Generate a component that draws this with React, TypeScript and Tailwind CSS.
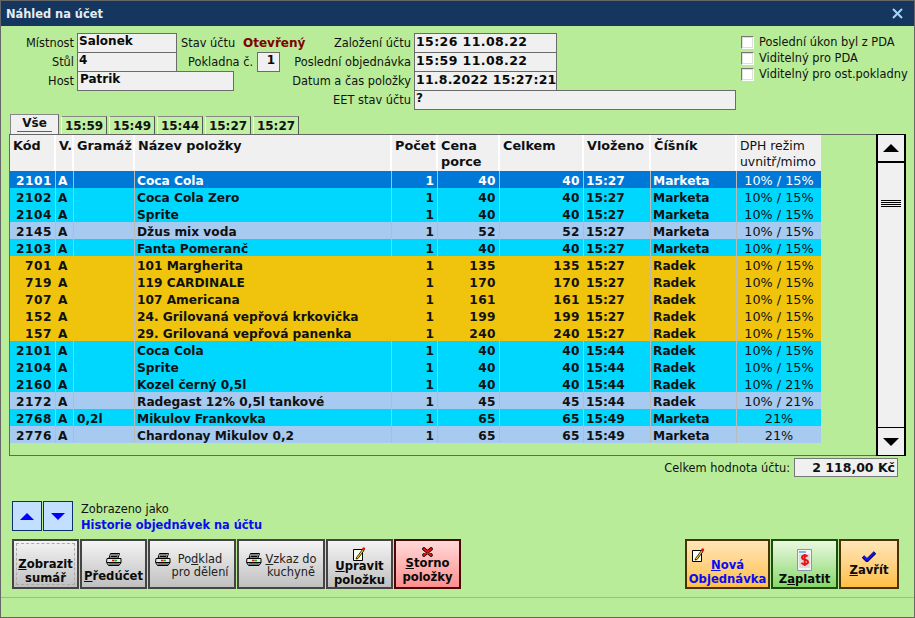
const cols = [
  "w-[46px]",
  "w-[18px]",
  "w-[61px]",
  "w-[257px]",
  "w-[46px]",
  "w-[62px]",
  "w-[84px]",
  "w-[67px]",
  "w-[86px]",
  "w-[84px]",
]

const CYAN = "bg-[#00d7ff]"
const BLUE = "bg-[#a6caf0]"
const GOLD = "bg-[#f0c40c]"
const SEL = "bg-[#0078d7] text-white"

const rows = [
  [SEL, "2101", "", "Coca Cola", "40", "15:27", "Marketa", "10% / 15%"],
  [CYAN, "2102", "", "Coca Cola Zero", "40", "15:27", "Marketa", "10% / 15%"],
  [CYAN, "2104", "", "Sprite", "40", "15:27", "Marketa", "10% / 15%"],
  [BLUE, "2145", "", "Džus mix voda", "52", "15:27", "Marketa", "10% / 15%"],
  [CYAN, "2103", "", "Fanta Pomeranč", "40", "15:27", "Marketa", "10% / 15%"],
  [GOLD, "701", "", "101 Margherita", "135", "15:27", "Radek", "10% / 15%"],
  [GOLD, "719", "", "119 CARDINALE", "170", "15:27", "Radek", "10% / 15%"],
  [GOLD, "707", "", "107 Americana", "161", "15:27", "Radek", "10% / 15%"],
  [GOLD, "152", "", "24. Grilovaná vepřová krkovička", "199", "15:27", "Radek", "10% / 15%"],
  [GOLD, "157", "", "29. Grilovaná vepřová panenka", "240", "15:27", "Radek", "10% / 15%"],
  [CYAN, "2101", "", "Coca Cola", "40", "15:44", "Radek", "10% / 15%"],
  [CYAN, "2104", "", "Sprite", "40", "15:44", "Radek", "10% / 15%"],
  [CYAN, "2160", "", "Kozel černý 0,5l", "40", "15:44", "Radek", "10% / 21%"],
  [BLUE, "2172", "", "Radegast 12% 0,5l tankové", "45", "15:44", "Radek", "10% / 21%"],
  [CYAN, "2768", "0,2l", "Mikulov Frankovka", "65", "15:49", "Marketa", "21%"],
  [BLUE, "2776", "", "Chardonay Mikulov 0,2", "65", "15:49", "Marketa", "21%"],
]

function Field({ w, children, cls = "" }: { w: string; children: React.ReactNode; cls?: string }) {
  return (
    <div className={`${w} h-[20px] -mb-px border border-[#6b6b6b] bg-[#f0f0f0] px-[1px] font-bold leading-[15px] text-[#0a0a0a] overflow-hidden whitespace-nowrap ${cls}`}>
      {children}
    </div>
  )
}

function Check({ label }: { label: string }) {
  return (
    <div className="flex items-center h-[16px]">
      <div className="w-[13px] h-[13px] bg-white border border-[#777] border-r-white border-b-white shadow-[inset_0_0_0_1px_#ddd]" />
      <span className="ml-[5px]">{label}</span>
    </div>
  )
}

function Printer() {
  return (
    <svg width="16" height="13" viewBox="0 0 16 13" className="shrink-0">
      <path d="M4.500 .5h9l-1.500 4.500h-9z" fill="#fff" stroke="#000" />
      <path d="M5 2h7M4.500 3.500h7" stroke="#000" />
      <path d="M1 5.500h14v4l-2 3H2.500l-2-3z" fill="#e8e8e8" stroke="#000" />
      <path d="M1 9.500h14M2.500 11h11" stroke="#000" />
      <path d="M6 7.500h2.500" stroke="#e01010" strokeWidth="1.500" />
      <path d="M8.500 7.500h2.500" stroke="#10b010" strokeWidth="1.500" />
    </svg>
  )
}

function Note() {
  return (
    <svg width="13" height="14" viewBox="0 0 13 14" className="shrink-0">
      <path d="M.5 2.500h9v11h-9z" fill="#fffff0" stroke="#000" />
      <path d="M3.500 10.500l6-8 1.500 1-6 8-2 .5z" fill="#f2d21a" stroke="#000" strokeWidth=".8" />
      <circle cx="10.700" cy="1.800" r="1.500" fill="#e0101a" />
    </svg>
  )
}

function RedX() {
  return (
    <svg width="11" height="10" viewBox="0 0 11 10" className="shrink-0">
      <path d="M2 2l7 6M9 2l-7 6" stroke="#000" strokeWidth="3.600" strokeLinecap="round" />
      <path d="M2 2l7 6M9 2l-7 6" stroke="#ee1111" strokeWidth="2" strokeLinecap="round" />
    </svg>
  )
}

function Bill() {
  return (
    <svg width="15" height="22" viewBox="0 0 15 22" className="shrink-0">
      <path d="M.5 .5h14v21H.5z" fill="#f4f4f4" stroke="#8b97a5" />
      <path d="M2 2h7v2H2z" fill="#7fb2e0" />
      <path d="M2 6h11M2 8h11M2 10h11M2 12h11M2 14h11M2 16h11M2 18h11" stroke="#c4c4c4" />
      <path d="M10.500 7.500c-1-1.500-5.500-1.500-5.500 1 0 3 6 1.500 6 4.500 0 2.500-5 2.500-6.500 .8M7.700 5v12" fill="none" stroke="#ee1111" strokeWidth="2" />
    </svg>
  )
}

function BlueCheck() {
  return (
    <svg width="14" height="11" viewBox="0 0 14 11" className="shrink-0">
      <path d="M1 5.500l4 4 8-8" fill="none" stroke="#000066" strokeWidth="3.400" />
      <path d="M1.500 5.500l3.500 3.500 7.500-7.500" fill="none" stroke="#1414ee" strokeWidth="2" />
    </svg>
  )
}

const grayBtn = "border-2 border-[#444] bg-gradient-to-b from-[#f4f4f4] to-[#c0c0c0]"
const btnText = "font-bold text-[11.6px] leading-[14px] text-[#0a0a0a] text-center"

function Arrow({ down }: { down?: boolean }) {
  return (
    <button className="w-[30px] h-[30px] border border-[#0a2f6a] bg-[#c3dfff] flex items-center justify-center">
      <span className={`w-0 h-0 border-x-[7px] border-x-transparent ${down ? "border-t-[7px] border-t-[#0000ff]" : "border-b-[7px] border-b-[#0000ff]"}`} />
    </button>
  )
}

function ScrollArrow({ down }: { down?: boolean }) {
  return (
    <div className={`h-[28px] flex items-center justify-center bg-[#f0f0f0] ${down ? "border-t-1 border-black" : "border-b-2 border-black"}`}>
      <span className={`w-0 h-0 border-x-[8px] border-x-transparent ${down ? "border-t-[8px] border-t-black" : "border-b-[8px] border-b-black"}`} />
    </div>
  )
}

export default function App() {
  return (
    <div className="w-[915px] h-[618px] flex flex-col border border-[#666] bg-[#b8ec98] text-[#111] text-[11.4px] leading-[14px] font-['DejaVu_Sans','Verdana',sans-serif] overflow-hidden">
      {/* title bar */}
      <div className="h-[25px] shrink-0 bg-[#14365f] flex items-center justify-between pl-[5px] pr-[11px] text-[#e4ecf4] font-bold text-[11.4px]">
        <span>Náhled na účet</span>
        <svg width="11" height="11" viewBox="0 0 11 11">
          <path d="M1 1l9 9M10 1l-9 9" stroke="#a8d4f8" strokeWidth="2" />
        </svg>
      </div>

      {/* top form */}
      <div className="flex mt-[7px] h-[77px] shrink-0">
        <div className="w-[735px] flex flex-col">
          <div className="flex items-center h-[19px] w-[556px]">
            <span className="w-[73px] text-right">Místnost</span>
            <div className="ml-[3px]"><Field w="w-[100px]" cls="text-[12px]">Salonek</Field></div>
            <span className="ml-[4px] w-[62px]">Stav účtu</span>
            <span className="font-bold text-[12px] text-[#800000]">Otevřený</span>
            <span className="flex-1 text-right">Založení účtu</span>
            <div className="ml-[3px]"><Field w="w-[143px]" cls="text-[12.5px] tracking-[0.4px]">15:26 11.08.22</Field></div>
          </div>
          <div className="flex items-center h-[19px] w-[556px]">
            <span className="w-[73px] text-right">Stůl</span>
            <div className="ml-[3px]"><Field w="w-[100px]" cls="text-[12px]">4</Field></div>
            <span className="ml-[11px] w-[66px]">Pokladna č.</span>
            <div className="ml-[3px]"><Field w="w-[23px]" cls="text-[12px] text-right pr-[4px]">1</Field></div>
            <span className="flex-1 text-right">Poslední objednávka</span>
            <div className="ml-[3px]"><Field w="w-[143px]" cls="text-[12.5px] tracking-[0.4px]">15:59 11.08.22</Field></div>
          </div>
          <div className="flex items-center h-[19px] w-[556px]">
            <span className="w-[73px] text-right">Host</span>
            <div className="ml-[3px]"><Field w="w-[157px]" cls="text-[12px] pl-[2px]">Patrik</Field></div>
            <span className="flex-1 text-right">Datum a čas položky</span>
            <div className="ml-[3px]"><Field w="w-[143px]" cls="text-[12.5px] tracking-[0.2px]">11.8.2022 15:27:21</Field></div>
          </div>
          <div className="flex items-center h-[19px]">
            <span className="flex-1 text-right">EET stav účtu</span>
            <div className="ml-[3px]"><Field w="w-[322px]" cls="text-[12px]">?</Field></div>
          </div>
        </div>
        <div className="ml-[5px] flex flex-col mt-[1px]">
          <Check label="Poslední úkon byl z PDA" />
          <Check label="Viditelný pro PDA" />
          <Check label="Viditelný pro ost.pokladny" />
        </div>
      </div>

      {/* tabs */}
      <div className="flex items-end h-[24px] shrink-0 ml-[9px] gap-[2px] font-bold text-[12px]">
        <div className="w-[49px] h-[20px] border border-[#888] border-b-0 border-r-[#666] bg-[#f0f0f0] flex justify-center">
          <span className="border-b border-[#0078d7] px-[5px] h-[17px] leading-[17px]">Vše</span>
        </div>
        {["15:59", "15:49", "15:44", "15:27", "15:27"].map((t, i) => (
          <div key={i} className="w-[46px] h-[18px] border border-[#888] border-b-0 border-r-[#555] border-l-white bg-[#bff0a4] text-center leading-[19px]">
            {t}
          </div>
        ))}
      </div>

      {/* grid + scrollbar */}
      <div className="flex shrink-0 ml-[8px] h-[322px]">
        <div className="w-[867px] border-t border-l border-b border-[#666]">
          <div className="flex h-[36px] bg-[#f0f0f0] w-[811px] font-bold text-[12.8px] leading-[16px]">
            {["Kód", "V.", "Gramáž", "Název položky", "Počet", "Cena porce", "Celkem", "Vloženo", "Číšník"].map((h, i) => (
              <div key={h} className={`${cols[i]} shrink-0 border-r-2 border-white pt-[3px] pl-[3px] whitespace-normal`}>
                {h}
              </div>
            ))}
            <div className={`${cols[9]} shrink-0 px-[3px] pt-[3px] font-normal text-[12.4px] whitespace-nowrap`}>
              DPH režim<br />uvnitř/mimo
            </div>
          </div>
          {rows.map((r, i) => (
            <div key={i} className={`flex h-[17px] w-[811px] leading-[20px] font-bold text-[12.2px] ${r[0]}`}>
              <div className={`${cols[0]} border-r border-[#bbb] text-right pr-[3px] tracking-[0.5px]`}>{r[1]}</div>
              <div className={`${cols[1]} border-r border-[#bbb] pl-[2px]`}>A</div>
              <div className={`${cols[2]} border-r border-[#bbb] pl-[3px]`}>{r[2]}</div>
              <div className={`${cols[3]} border-r border-[#bbb] pl-[2px] whitespace-nowrap`}>{r[3]}</div>
              <div className={`${cols[4]} border-r border-[#bbb] text-right pr-[3px]`}>1</div>
              <div className={`${cols[5]} border-r border-[#bbb] text-right pr-[3px] tracking-[0.4px]`}>{r[4]}</div>
              <div className={`${cols[6]} border-r border-[#bbb] text-right pr-[3px] tracking-[0.4px]`}>{r[4]}</div>
              <div className={`${cols[7]} border-r border-[#bbb] pl-[2px]`}>{r[5]}</div>
              <div className={`${cols[8]} border-r border-[#bbb] pl-[2px]`}>{r[6]}</div>
              <div className={`${cols[9]} text-center font-normal text-[12.8px] leading-[19px]`}>{r[7]}</div>
            </div>
          ))}
        </div>
        <div className="w-[30px] border-2 border-l-2 border-black border-y-1 bg-[#f0f0f0] flex flex-col justify-between relative">
          <ScrollArrow />
          <div className="absolute left-[3px] right-[3px] top-[65px] flex flex-col gap-[1px]">
            <div className="h-[1px] bg-black" />
            <div className="h-[1px] bg-black" />
            <div className="h-[1px] bg-black" />
            <div className="h-[1px] bg-black" />
          </div>
          <ScrollArrow down />
        </div>
      </div>

      {/* total */}
      <div className="flex items-center justify-end shrink-0 mt-[2px] pr-[16px] h-[19px]">
        <span>Celkem hodnota účtu:</span>
        <div className="ml-[4px] w-[104px] h-[19px] border border-[#777] bg-[#f0f0f0] text-right pr-[2px] font-bold text-[12.5px] leading-[17px]">
          2 118,00 Kč
        </div>
      </div>

      {/* view switch */}
      <div className="flex shrink-0 mt-[24px] ml-[11px] h-[30px]">
        <div className="flex gap-[1px]">
          <Arrow />
          <Arrow down />
        </div>
        <div className="ml-[8px]">
          <div className="h-[16px] leading-[16px]">Zobrazeno jako</div>
          <div className="font-bold text-[#0a0af5] leading-[16px]">Historie objednávek na účtu</div>
        </div>
      </div>

      {/* buttons */}
      <div className="flex justify-between shrink-0 mt-[8px] ml-[11px] mr-[15px] h-[50px]">
        <div className="flex gap-[1px]">
          <button className={`w-[67px] h-[50px] ${grayBtn} ${btnText} p-[2px]`}>
            <div className="h-full border border-dashed border-[#aaa] pt-[13px]">
              <u>Z</u>obrazit<br />sumář
            </div>
          </button>
          <button className={`w-[67px] h-[50px] ${grayBtn} ${btnText} flex flex-col items-center pt-[12px]`}>
            <Printer />
            <span className="mt-[3px]"><u>P</u>ředúčet</span>
          </button>
          <button className={`w-[88px] h-[50px] ${grayBtn} flex items-start justify-center pt-[12px] font-normal text-[11.4px] leading-[13px] text-[#222]`}>
            <Printer />
            <span className="text-center">Po<u>d</u>klad<br />pro dělení</span>
          </button>
          <button className={`w-[88px] h-[50px] ${grayBtn} flex items-start justify-center pt-[12px] font-normal text-[11.4px] leading-[13px] text-[#222]`}>
            <Printer />
            <span className="ml-[4px] text-center"><u>V</u>zkaz do<br />kuchyně</span>
          </button>
          <button className={`w-[67px] h-[50px] ${grayBtn} ${btnText} flex flex-col items-center pt-[6px]`}>
            <Note />
            <span className="-mt-[2px]"><u>U</u>pravit<br />položku</span>
          </button>
          <button className={`w-[67px] h-[50px] border-2 border-[#4a0808] bg-gradient-to-b from-[#ffd9d9] to-[#ff8f8f] ${btnText} flex flex-col items-center pt-[6px]`}>
            <RedX />
            <span className="-mt-[1px]"><u>S</u>torno<br />položky</span>
          </button>
        </div>
        <div className="flex gap-[1px]">
          <button className="w-[85px] h-[50px] border-2 border-[#4a3208] bg-gradient-to-b from-[#ffe6b8] to-[#ffbf40] font-bold text-[11.6px] leading-[14px] text-[#0a0af5] relative pt-[16px] text-center">
            <span className="absolute left-[5px] top-[7px]"><Note /></span>
            <u>N</u>ová<br />Objednávka
          </button>
          <button className={`w-[67px] h-[50px] border-2 border-[#1f4a10] bg-gradient-to-b from-[#eaf8e0] to-[#86d868] ${btnText} flex flex-col items-center pt-[8px]`}>
            <Bill />
            <span className="mt-[1px]">Z<u>a</u>platit</span>
          </button>
          <button className={`w-[60px] h-[50px] border-2 border-[#4a3208] bg-gradient-to-b from-[#ffe6b8] to-[#ffbf40] ${btnText} flex flex-col items-center pt-[10px]`}>
            <BlueCheck />
            <span className="mt-[1px]"><u>Z</u>avřít</span>
          </button>
        </div>
      </div>

      {/* status line */}
      <div className="mt-[8px] border-t border-[#aab0a8]" />
    </div>
  )
}
